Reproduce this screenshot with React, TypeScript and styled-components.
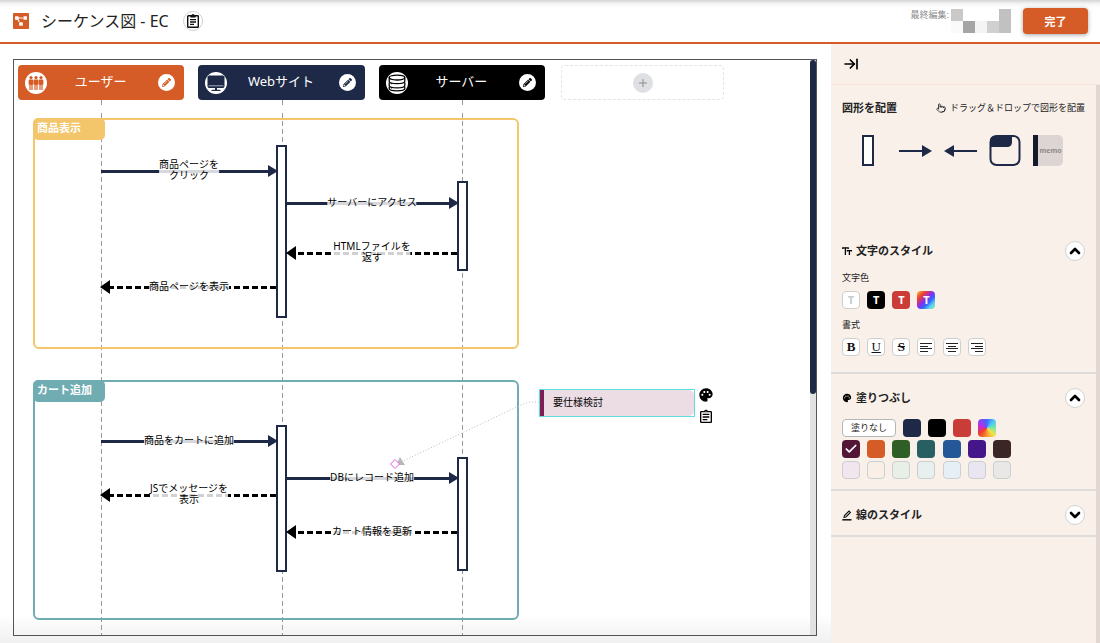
import React from 'react';
import styled, { createGlobalStyle, css } from 'styled-components';
import { ArrowRightToLine, Check, ChevronDown, ChevronUp, Pointer } from 'lucide-react';
import { MdOutlineAssignment, MdPalette } from 'react-icons/md';
import { FaPencilAlt, FaProjectDiagram } from 'react-icons/fa';

const NAVY = '#1e2947';
const ORANGE = '#d65c27';

const GlobalStyle = createGlobalStyle`
  * { box-sizing: border-box; }
  body {
    margin: 0;
    font-family: "Noto Sans", "Noto Sans CJK JP", sans-serif;
    color: #222;
    background: #fff;
  }
  button {
    font-family: inherit;
    color: inherit;
    padding: 0;
    border: 0;
    background: none;
    cursor: pointer;
  }
  svg { display: block; }
`;

const Page = styled.div`
  display: flex;
  flex-direction: column;
  min-height: 100vh;
`;

/* ---------- header ---------- */

const Header = styled.header`
  display: flex;
  align-items: center;
  gap: 12px;
  height: 44px;
  padding: 0 12px 0 13px;
  border-bottom: 2px solid ${ORANGE};
  background: linear-gradient(#d4d4d4, #f6f6f6 4px, #fff 8px);
`;

const Logo = styled.span`
  display: flex;
  align-items: center;
  justify-content: center;
  width: 16px;
  height: 16px;
  border-radius: 1px;
  background: ${ORANGE};
  color: #fff;
`;

const Title = styled.h1`
  margin: 0;
  padding-right: 2px;
  font-size: 16px;
  line-height: 24px;
  font-weight: 400;
  white-space: nowrap;
`;

const RoundButton = styled.button`
  display: flex;
  flex: none;
  align-items: center;
  justify-content: center;
  width: 20px;
  height: 20px;
  border: 1px solid #cfd3d3;
  border-radius: 50%;
  background: #fff;
  color: #000;
`;

const LastEdit = styled.div`
  display: flex;
  align-items: flex-start;
  gap: 2px;
  margin-left: auto;
  font-size: 9px;
  line-height: 12px;
  color: #8c8c8c;
`;

const Mosaic = styled.span`
  display: grid;
  grid-template-columns: repeat(5, 12px);
  grid-auto-rows: 12px;
`;

const MosaicCell = styled.span<{ $tone: string }>`
  background: ${(p) => p.$tone};
`;

const DoneButton = styled.button`
  width: 65px;
  height: 26px;
  border-radius: 4px;
  background: ${ORANGE};
  box-shadow: 0 1px 4px rgba(0, 0, 0, 0.35);
  color: #fff;
  font-size: 11px;
  font-weight: 700;
`;

/* ---------- canvas ---------- */

const Main = styled.main`
  display: flex;
  flex: 1;
`;

const Workspace = styled.section`
  display: flex;
  flex: 1;
  min-width: 0;
  padding: 15px 14px 7px 13px;
  background: linear-gradient(to top, #f0f0f0, #fff 28px);
`;

const Board = styled.div`
  display: flex;
  flex: 1;
  min-width: 0;
  border: 1px solid #555;
`;

const Diagram = styled.div`
  position: relative;
  flex: 1;
  min-width: 0;
  min-height: 568px;
  overflow: hidden;
`;

const ScrollTrack = styled.div`
  flex: none;
  width: 6px;
  background: #e2e2e2;
`;

const ScrollThumb = styled.div`
  height: 58%;
  border-radius: 3px;
  background: ${NAVY};
`;

const Drawing = styled.svg`
  position: absolute;
  inset: 0;
  width: 100%;
  height: 100%;
`;

const LaneBar = styled.div`
  position: relative;
  display: flex;
  gap: 16px;
  padding: 5px 4px;
`;

const Lanes = styled.div`
  display: grid;
  grid-template-columns: repeat(3, 1fr);
  gap: 14px;
  flex: none;
  width: 527px;
`;

const Lane = styled.div<{ $color: string }>`
  display: flex;
  align-items: center;
  height: 35px;
  padding: 0 9px 0 7px;
  border-radius: 4px;
  background: ${(p) => p.$color};
  color: #fff;
`;

const LaneIcon = styled.span<{ $color: string }>`
  display: flex;
  align-items: center;
  justify-content: center;
  width: 22px;
  height: 22px;
  border-radius: 50%;
  background: #fff;
  color: ${(p) => p.$color};
`;

const LaneName = styled.span`
  flex: 1;
  padding: 0 4px 3px 0;
  text-align: center;
  font-size: 13px;
  line-height: 20px;
`;

const LaneEdit = styled.button<{ $color: string }>`
  display: flex;
  align-items: center;
  justify-content: center;
  width: 17px;
  height: 17px;
  border-radius: 50%;
  background: #fff;
  color: ${(p) => p.$color};
`;

const AddLane = styled.div`
  display: flex;
  align-items: center;
  justify-content: center;
  flex: none;
  width: 163px;
  height: 35px;
  border: 1px dashed #e4e4e4;
  border-radius: 4px;
`;

const AddButton = styled.button`
  display: flex;
  align-items: center;
  justify-content: center;
  width: 20px;
  height: 20px;
  border-radius: 50%;
  background: #dfe0e4;
  color: #8b8b8b;
`;

const Group = styled.div<{ $top: number; $height: number; $color: string }>`
  position: absolute;
  left: 19px;
  top: ${(p) => p.$top}px;
  width: 486px;
  height: ${(p) => p.$height}px;
  border: 2px solid ${(p) => p.$color};
  border-radius: 6px;
`;

const GroupName = styled.span<{ $color: string }>`
  display: block;
  width: 72px;
  height: 22px;
  margin: -2px;
  padding-left: 4px;
  border-radius: 5px;
  background: ${(p) => p.$color};
  color: #fff;
  font-size: 11px;
  font-weight: 700;
  line-height: 20px;
`;

const MessageText = styled.span<{ $x: number; $y: number }>`
  position: absolute;
  left: ${(p) => p.$x}px;
  top: ${(p) => p.$y}px;
  transform: translate(-50%, -50%);
  background: rgba(255, 255, 255, 0.82);
  color: #000;
  font-size: 10px;
  line-height: 11px;
  text-align: center;
  white-space: pre;
`;

const Memo = styled.div`
  position: absolute;
  left: 525px;
  top: 329px;
  width: 156px;
  height: 28px;
  border: 1px solid #5fdde1;
  background: #fff;
`;

const MemoBody = styled.div`
  height: 26px;
  padding-left: 9px;
  border-left: 4px solid #7b1f52;
  border-radius: 0 5px 5px 0;
  background: #ecdde4;
  color: #000;
  font-size: 10px;
  line-height: 24px;
`;

const MemoTools = styled.div`
  position: absolute;
  left: 684px;
  top: 327px;
  display: flex;
  flex-direction: column;
  gap: 6px;
  color: #000;
`;

/* ---------- side panel ---------- */

const Panel = styled.aside`
  display: flex;
  flex: none;
  flex-direction: column;
  width: 269px;
  background: #f9f0ea;
`;

const PanelTop = styled.div`
  display: flex;
  align-items: center;
  height: 41px;
  padding-left: 12px;
  border-bottom: 1px solid #f7e4d8;
  color: #000;
`;

const PanelBody = styled.div`
  flex: 1;
  border-right: 4px solid #e2d7d3;
`;

const ShapeSection = styled.section`
  height: 142px;
  padding: 13px 11px;
`;

const Section = styled.section`
  padding: 14px 11px 10px;
  border-bottom: 2px solid #dedddb;
`;

const SectionHead = styled.div`
  display: flex;
  align-items: center;
  justify-content: space-between;
  height: 20px;
`;

const Heading = styled.h2`
  display: flex;
  align-items: center;
  gap: 4px;
  margin: 0;
  font-size: 11px;
  line-height: 18px;
  font-weight: 700;
  svg { color: #000; }
`;

const Hint = styled.span`
  display: flex;
  align-items: center;
  gap: 4px;
  font-size: 9px;
  line-height: 18px;
  white-space: nowrap;
`;

const ShapeRow = styled.div`
  display: flex;
  gap: 12px;
  margin: 17px 0 0 20px;
`;

const MemoShape = styled.button`
  width: 30px;
  height: 31px;
  border-left: 5px solid #141a2c;
  border-radius: 0 5px 5px 0;
  background: #dcd5d3;
  color: #8f8a8a;
  font-size: 7px;
  font-weight: 700;
`;

const Field = styled.div`
  padding-top: 8px;
  & + & { padding: 7px 0 6px; }
`;

const FieldName = styled.div`
  margin-bottom: 4px;
  font-size: 9px;
  line-height: 18px;
`;

const Tiles = styled.div`
  display: grid;
  grid-template-columns: repeat(7, 18px);
  justify-content: space-between;
  width: 169px;
`;

const Tile = styled.button<{ $bg?: string; $plain?: boolean }>`
  display: flex;
  align-items: center;
  justify-content: center;
  width: 18px;
  height: 18px;
  border-radius: 4px;
  background: ${(p) => p.$bg ?? '#fff'};
  color: #fff;
  font-size: 11px;
  line-height: 16px;
  font-weight: 700;
  ${(p) =>
    p.$plain &&
    css`
      border: 1px solid #cbcfcf;
    `}
`;

const TextTile = styled(Tile)<{ $ink: string }>`
  color: ${(p) => p.$ink};
`;

const FormatTile = styled(Tile)<{ $line?: string; $weight: number }>`
  color: #111;
  font-family: "Liberation Serif", serif;
  font-size: 13px;
  font-weight: ${(p) => p.$weight};
  text-decoration: ${(p) => p.$line ?? 'none'};
`;

const Palette = styled.div`
  display: flex;
  flex-direction: column;
  gap: 3px;
  padding-top: 11px;
`;

const PaletteRow = styled.div`
  display: flex;
  gap: 7px;
`;

const NoFill = styled.button`
  width: 54px;
  height: 18px;
  border: 1px solid #b5b7b7;
  border-radius: 4px;
  background: #fff;
  font-size: 9px;
  line-height: 14px;
`;

/* ---------- icons ---------- */

const ClipboardIcon = () => (
  <svg width="14" height="16" viewBox="0 0 14 16" fill="none" stroke="#111" strokeWidth="1.4">
    <rect x="1.7" y="2.7" width="10.6" height="11.6" rx="0.6" />
    <path d="M4.6 2.2h1.2L7 1l1.2 1.2h1.2v2H4.6z" fill="#111" strokeWidth="0.6" />
    <path d="M4 6.6h6M4 9h6M4 11.4h4" strokeWidth="1.3" />
  </svg>
);

const PeopleIcon = () => (
  <svg width="16" height="16" viewBox="0 0 16 16" fill="currentColor">
    {[3, 8, 13].map((x) => (
      <g key={x}>
        <circle cx={x} cy="2.6" r="1.6" />
        <path
          d={`M${x - 2.4} 5.4q0-1 1-1h2.800q1 0 1 1v4.200h-.8v5.400h-1.200V10h-.8v5h-1.200V9.600h-.8z`}
        />
      </g>
    ))}
  </svg>
);

const MonitorIcon = () => (
  <svg width="20" height="20" viewBox="0 0 20 20" fill="none" stroke="currentColor">
    <rect x="2" y="3" width="16" height="11.5" rx="1" fill="currentColor" />
    <path d="M2.500 12.800h15" stroke="#fff" strokeWidth="0.6" />
    <path d="M10 14v3" strokeWidth="2" />
    <path d="M5.500 17.400h9" strokeWidth="1.2" />
  </svg>
);

const DatabaseIcon = () => (
  <svg width="20" height="20" viewBox="0 0 20 20" fill="none" stroke="currentColor" strokeWidth="1.3">
    <ellipse cx="10" cy="4.600" rx="7.800" ry="2.400" />
    <path d="M2.200 4.600v3.600c0 3.200 15.600 3.200 15.600 0V4.600" />
    <path d="M2.200 9.600v2.800c0 3.200 15.600 3.200 15.600 0V9.600" />
    <path d="M2.200 13.800v1.800c0 3 15.600 3 15.600 0v-1.800" />
    <path d="M4.400 10.200v1M4.400 14.400v1" strokeWidth="1.1" />
  </svg>
);

const TextSizeIcon = () => (
  <svg width="10" height="10" viewBox="0 0 10 10" fill="none" stroke="#000" strokeWidth="1.3">
    <path d="M.8 3V1.800h5.400V3M3.400 1.800v7.200" />
    <path d="M5.400 5.600V4.600h4V5.600M7.400 4.600v4.400" />
  </svg>
);

const LinePenIcon = () => (
  <svg width="10" height="11" viewBox="0 0 10 11" fill="none" stroke="#111">
    <path d="M2 7.4l.5-1.8L7 1.1l1.4 1.3L3.9 7z" strokeWidth="1.1" />
    <path d="M0.3 9.8h9.2" strokeWidth="1.5" />
  </svg>
);

const AlignIcon = ({ side }: { side: 'left' | 'center' | 'right' }) => {
  const start = (w: number) => (side === 'left' ? 0 : side === 'right' ? 12 - w : (12 - w) / 2);
  return (
    <svg width="12" height="11" viewBox="0 0 12 11" fill="#222" shapeRendering="crispEdges">
      {[12, 8, 12, 8].map((w, i) => (
        <rect key={i} x={start(w)} y={1 + i * 3 - (i > 1 ? 1 : 0)} width={w} height="1" />
      ))}
    </svg>
  );
};

/* ---------- data ---------- */

const lanes = [
  { name: 'ユーザー', color: ORANGE, Icon: PeopleIcon },
  { name: 'Webサイト', color: NAVY, Icon: MonitorIcon },
  { name: 'サーバー', color: '#000', Icon: DatabaseIcon },
];

const lifelines = [87, 268, 448];

const activations = [
  { x: 263, y: 86, h: 171 },
  { x: 444, y: 122, h: 88 },
  { x: 263, y: 366, h: 145 },
  { x: 444, y: 398, h: 112 },
];

type Message = { from: number; to: number; y: number; reply?: boolean; text: string; tx: number; ty: number };

const messages: Message[] = [
  { from: 87, to: 264, y: 111, text: '商品ページを\nクリック', tx: 175, ty: 110 },
  { from: 272, to: 445, y: 143, text: 'サーバーにアクセス', tx: 358, ty: 142 },
  { from: 443, to: 272, y: 193, reply: true, text: 'HTMLファイルを\n返す', tx: 358, ty: 192 },
  { from: 262, to: 86, y: 227, reply: true, text: '商品ページを表示', tx: 175, ty: 226 },
  { from: 87, to: 264, y: 381, text: '商品をカートに追加', tx: 175, ty: 380 },
  { from: 272, to: 445, y: 418, text: 'DBにレコード追加', tx: 358, ty: 417 },
  { from: 262, to: 86, y: 435, reply: true, text: 'JSでメッセージを\n表示', tx: 175, ty: 434 },
  { from: 443, to: 272, y: 472, reply: true, text: 'カート情報を更新', tx: 358, ty: 471 },
];

const textColors = [
  { name: '白', bg: '#fff', ink: '#c4cccc', plain: true },
  { name: '黒', bg: '#000', ink: '#fff' },
  { name: '赤', bg: '#c93c37', ink: '#fff' },
  {
    name: 'カスタム',
    bg: 'linear-gradient(135deg, #f5c33b, #f2402c 24%, #8a2bf0 48%, #2f6bff 64%, #62d8f0 82%, #7de89a)',
    ink: '#fff',
  },
];

const baseFills = [
  NAVY,
  '#000',
  '#c93c37',
  'conic-gradient(#3d6bff, #4cc6f5 12%, #7de8a0 25%, #f5e04a 38%, #f79a2c 50%, #f03a2c 65%, #c02be0 80%, #3d6bff)',
];
const darkFills = ['#541637', '#d65c27', '#2f5f26', '#285f63', '#235798', '#44168a', '#3a2624'];
const lightFills = ['#f1e6ee', '#faefe7', '#e8efe7', '#e7f0ef', '#e6eef6', '#e9e6f2', '#e9e8e7'];

/* ---------- parts ---------- */

const Arrow = ({ m }: { m: Message }) => {
  const dir = m.to > m.from ? 1 : -1;
  const half = m.reply ? 7 : 6;
  const base = m.to - dir * 10;
  const color = m.reply ? '#000' : NAVY;
  return (
    <g>
      <line
        x1={m.from}
        x2={base}
        y1={m.y}
        y2={m.y}
        stroke={color}
        strokeWidth="3"
        strokeDasharray={m.reply ? '6 3' : undefined}
        shapeRendering="crispEdges"
      />
      <polygon points={`${base},${m.y - half} ${m.to},${m.y} ${base},${m.y + half}`} fill={color} />
    </g>
  );
};

const SequenceDiagram = () => (
  <Diagram>
    <Drawing aria-hidden="true">
      {lifelines.map((x) => (
        <g key={x} stroke="#999" shapeRendering="crispEdges">
          <line x1={x} x2={x} y1="40" y2="45" />
          <line x1={x} x2={x} y1="53" y2="100%" strokeDasharray="5 3" />
        </g>
      ))}
    </Drawing>
    <LaneBar>
      <Lanes>
        {lanes.map(({ name, color, Icon }) => (
          <Lane key={name} $color={color}>
            <LaneIcon $color={color}>
              <Icon />
            </LaneIcon>
            <LaneName>{name}</LaneName>
            <LaneEdit $color={color} aria-label={`${name}を編集`}>
              <FaPencilAlt size={9} />
            </LaneEdit>
          </Lane>
        ))}
      </Lanes>
      <AddLane>
        <AddButton aria-label="追加">
          <svg width="10" height="10" viewBox="0 0 10 10" stroke="currentColor">
            <path d="M5 1v8M1 5h8" />
          </svg>
        </AddButton>
      </AddLane>
    </LaneBar>
    <Group $top={58} $height={231} $color="#f3c66b">
      <GroupName $color="#f3c66b">商品表示</GroupName>
    </Group>
    <Group $top={320} $height={240} $color="#70adb3">
      <GroupName $color="#70adb3">カート追加</GroupName>
    </Group>
    <Drawing aria-hidden="true">
      {activations.map((a) => (
        <rect
          key={`${a.x}-${a.y}`}
          x={a.x}
          y={a.y}
          width="9"
          height={a.h}
          fill="#fff"
          stroke={NAVY}
          strokeWidth="2"
        />
      ))}
      {messages.map((m) => (
        <Arrow key={m.text} m={m} />
      ))}
      <path d="M525 342h-6q-6 0-12 3L389 401" fill="none" stroke="#bbb" strokeDasharray="1 2" />
      <path d="M382 405l4-8 5 8z" fill="#b9b9b9" />
      <path d="M381 399.500l4.500 4.500-4.500 4.500-4.500-4.500z" fill="#fff" stroke="#e65cf0" />
    </Drawing>
    {messages.map((m) => (
      <MessageText key={m.text} $x={m.tx} $y={m.ty}>
        {m.text}
      </MessageText>
    ))}
    <Memo>
      <MemoBody>要仕様検討</MemoBody>
    </Memo>
    <MemoTools>
      <button aria-label="色">
        <MdPalette size={16} />
      </button>
      <button aria-label="メモ">
        <MdOutlineAssignment size={16} />
      </button>
    </MemoTools>
  </Diagram>
);

const Toggle = ({ open, label }: { open: boolean; label: string }) => (
  <RoundButton aria-label={label} aria-expanded={open}>
    {open ? <ChevronUp size={16} strokeWidth={4} /> : <ChevronDown size={16} strokeWidth={4} />}
  </RoundButton>
);

const ArrowShape = ({ flip }: { flip?: boolean }) => (
  <svg width="33" height="31" viewBox="0 0 33 31">
    <g fill={NAVY} transform={flip ? 'matrix(-1 0 0 1 33 0)' : undefined}>
      <rect x="0" y="15" width="24" height="2" />
      <path d="M23 10l10 6-10 6z" />
    </g>
  </svg>
);

const SidePanel = () => (
  <Panel>
    <PanelTop>
      <button aria-label="パネルを閉じる">
        <ArrowRightToLine size={16} strokeWidth={2.5} />
      </button>
    </PanelTop>
    <PanelBody>
      <ShapeSection>
        <SectionHead>
          <Heading>図形を配置</Heading>
          <Hint>
            <Pointer size={10} />
            ドラッグ＆ドロップで図形を配置
          </Hint>
        </SectionHead>
        <ShapeRow>
          <button aria-label="活性区間">
            <svg width="25" height="31" viewBox="0 0 25 31">
              <rect x="1" y="1" width="10" height="29" fill="#fff" stroke={NAVY} strokeWidth="2" />
            </svg>
          </button>
          <button aria-label="右矢印">
            <ArrowShape />
          </button>
          <button aria-label="左矢印">
            <ArrowShape flip />
          </button>
          <button aria-label="グループ">
            <svg width="32" height="31" viewBox="0 0 32 31">
              <rect x="1.500" y="1" width="29" height="29" rx="6" fill="none" stroke={NAVY} strokeWidth="2" />
              <path d="M1 11V6q0-5 5-5h17v6q0 5-5 5H2z" fill={NAVY} />
            </svg>
          </button>
          <MemoShape>memo</MemoShape>
        </ShapeRow>
      </ShapeSection>

      <Section>
        <SectionHead>
          <Heading>
            <TextSizeIcon />
            文字のスタイル
          </Heading>
          <Toggle open label="文字のスタイル" />
        </SectionHead>
        <Field>
          <FieldName>文字色</FieldName>
          <Tiles>
            {textColors.map((c) => (
              <TextTile key={c.name} $bg={c.bg} $ink={c.ink} $plain={c.plain} aria-label={c.name}>
                T
              </TextTile>
            ))}
          </Tiles>
        </Field>
        <Field>
          <FieldName>書式</FieldName>
          <Tiles>
            <FormatTile $plain $weight={700}>B</FormatTile>
            <FormatTile $plain $weight={400} $line="underline">U</FormatTile>
            <FormatTile $plain $weight={700} $line="line-through">S</FormatTile>
            <Tile $plain aria-label="左揃え">
              <AlignIcon side="left" />
            </Tile>
            <Tile $plain aria-label="中央揃え">
              <AlignIcon side="center" />
            </Tile>
            <Tile $plain aria-label="右揃え">
              <AlignIcon side="right" />
            </Tile>
          </Tiles>
        </Field>
      </Section>

      <Section>
        <SectionHead>
          <Heading>
            <MdPalette size={10} />
            塗りつぶし
          </Heading>
          <Toggle open label="塗りつぶし" />
        </SectionHead>
        <Palette>
          <PaletteRow>
            <NoFill>塗りなし</NoFill>
            {baseFills.map((c) => (
              <Tile key={c} $bg={c} aria-label="塗り色" />
            ))}
          </PaletteRow>
          <Tiles>
            {darkFills.map((c, i) => (
              <Tile key={c} $bg={c} aria-label="濃い色" aria-pressed={i === 0}>
                {i === 0 && <Check size={14} strokeWidth={3} />}
              </Tile>
            ))}
          </Tiles>
          <Tiles>
            {lightFills.map((c) => (
              <Tile key={c} $bg={c} $plain aria-label="淡い色" />
            ))}
          </Tiles>
        </Palette>
      </Section>

      <Section>
        <SectionHead>
          <Heading>
            <LinePenIcon />
            線のスタイル
          </Heading>
          <Toggle open={false} label="線のスタイル" />
        </SectionHead>
      </Section>
    </PanelBody>
  </Panel>
);

const mosaicTones = [
  '#c9c9c9', '#fff', '#fff', '#fff', '#c1c1c1',
  '#fafafa', '#a5a5a5', '#f4f4f4', '#d0d0d0', '#c1c1c1',
];

export default function App() {
  return (
    <Page>
      <GlobalStyle />
      <Header>
        <Logo>
          <FaProjectDiagram size={12} />
        </Logo>
        <Title>シーケンス図 - EC</Title>
        <RoundButton aria-label="メモ">
          <ClipboardIcon />
        </RoundButton>
        <LastEdit>
          最終編集:
          <Mosaic>
            {mosaicTones.map((tone, i) => (
              <MosaicCell key={i} $tone={tone} />
            ))}
          </Mosaic>
        </LastEdit>
        <DoneButton>完了</DoneButton>
      </Header>
      <Main>
        <Workspace>
          <Board>
            <SequenceDiagram />
            <ScrollTrack>
              <ScrollThumb />
            </ScrollTrack>
          </Board>
        </Workspace>
        <SidePanel />
      </Main>
    </Page>
  );
}
